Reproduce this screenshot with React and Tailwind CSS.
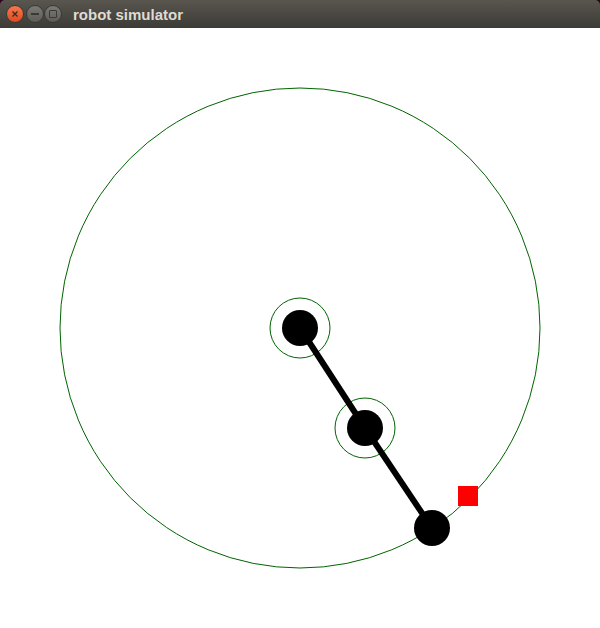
import React from 'react';

const TITLE_FONT = { fontFamily: '"Liberation Sans", "DejaVu Sans", sans-serif' };

function WinButton({ kind }) {
  if (kind === 'close') {
    return (
      <div className="w-[18px] h-[18px] rounded-full bg-gradient-to-b from-[#f6784b] to-[#e0491e] border border-[#3a3935] flex items-center justify-center">
        <svg width="8" height="8" viewBox="0 0 8 8">
          <path d="M1.5 1.5 L6.5 6.5 M6.5 1.5 L1.5 6.5" stroke="#3b2a22" strokeWidth="1.4" />
        </svg>
      </div>
    );
  }
  return (
    <div className="w-[18px] h-[18px] rounded-full bg-gradient-to-b from-[#7b7a75] to-[#5d5c57] border border-[#3a3935] flex items-center justify-center">
      {kind === 'min' ? (
        <div className="w-[8px] h-[2px] bg-[#3a3935]" />
      ) : (
        <div className="w-[8px] h-[8px] border border-[#3a3935] rounded-[1px]" />
      )}
    </div>
  );
}

function Arm() {
  const base = [300, 328];
  const elbow = [365, 428];
  const tip = [432, 528];
  return (
    <svg width="600" height="600" viewBox="0 28 600 600" className="block">
      <circle cx="300" cy="328" r="240" fill="none" stroke="#006400" strokeWidth="1" />
      <rect x="458" y="486" width="20" height="20" fill="#ff0000" />
      <circle cx={base[0]} cy={base[1]} r="30" fill="none" stroke="#006400" strokeWidth="1" />
      <circle cx={elbow[0]} cy={elbow[1]} r="30" fill="none" stroke="#006400" strokeWidth="1" />
      <line x1={base[0]} y1={base[1]} x2={elbow[0]} y2={elbow[1]} stroke="#000" strokeWidth="6" />
      <line x1={elbow[0]} y1={elbow[1]} x2={tip[0]} y2={tip[1]} stroke="#000" strokeWidth="6" />
      <circle cx={base[0]} cy={base[1]} r="18" fill="#000" />
      <circle cx={elbow[0]} cy={elbow[1]} r="18" fill="#000" />
      <circle cx={tip[0]} cy={tip[1]} r="18" fill="#000" />
    </svg>
  );
}

export default function App() {
  return (
    <div className="w-[600px] h-[628px] bg-[#2c001e] overflow-hidden">
      {/* Title bar */}
      <div className="h-[28px] rounded-t-[5px] bg-gradient-to-b from-[#59564f] to-[#3c3b37] flex items-center pl-[6px]">
        <div className="flex items-center">
          <WinButton kind="close" />
          <div className="ml-[2px]"><WinButton kind="min" /></div>
          <div className="ml-0"><WinButton kind="max" /></div>
        </div>
        <span className="ml-[11px] text-[15px] font-bold text-[#dfdbd2] leading-none" style={TITLE_FONT}>
          robot simulator
        </span>
      </div>
      <div className="bg-white">
        <Arm />
      </div>
    </div>
  );
}
